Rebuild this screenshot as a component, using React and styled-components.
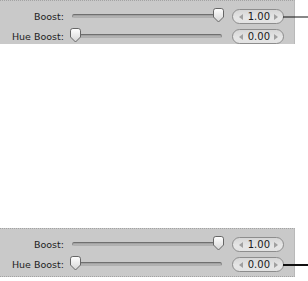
import React from 'react';
import styled, { createGlobalStyle } from 'styled-components';

const Global = createGlobalStyle`
  html, body { margin: 0; padding: 0; background: #ffffff; }
  body { width: 308px; height: 281px; overflow: hidden; font-family: "DejaVu Sans", "Liberation Sans", sans-serif; }
`;

const Page = styled.div`
  display: flex;
  flex-direction: column;
  gap: 184px;
  width: 308px;
`;

const Panel = styled.div`
  box-sizing: border-box;
  width: 295px;
  background: #c9c9c9;
  border-top: 1px dotted #a3a3a3;
  border-bottom: ${(p) => (p.$bottomDots ? '1px dotted #a3a3a3' : 'none')};
  border-right: 1px solid #b9b9b9;
  padding: ${(p) => p.$pad};
  display: grid;
  grid-template-columns: 64px 156px 52px;
  grid-auto-rows: 15px;
  column-gap: 6px;
  row-gap: 5px;
`;

const Label = styled.div`
  text-align: right;
  font-size: 9.5px;
  line-height: 15px;
  color: #1d1d1d;
  white-space: nowrap;
`;

const Slider = styled.div`
  position: relative;
  height: 15px;
`;

const Track = styled.div`
  box-sizing: border-box;
  margin: 5px 4px 0 2px;
  height: 4px;
  border-radius: 2px;
  border-top: 1px solid #6f6f6f;
  border-left: 1px solid #8a8a8a;
  border-right: 1px solid #8a8a8a;
  border-bottom: 1px solid #b0b0b0;
  background: linear-gradient(#9a9a9a, #b9b9b9);
`;

const Thumb = styled.svg`
  position: absolute;
  top: -1px;
  width: 11px;
  height: 15px;
  display: block;
`;

const Field = styled.div`
  position: relative;
  box-sizing: border-box;
  height: 15px;
  border: 1px solid #8d8d8d;
  border-radius: 8px;
  background: linear-gradient(#d6d6d6, #e6e6e6 60%, #e2e2e2);
  display: flex;
  align-items: center;
  padding: 0 5px 0 6px;
  font-size: 10px;
  color: #1a1a1a;
`;

const Arrow = styled.span`
  width: 0;
  height: 0;
  border-top: 3px solid transparent;
  border-bottom: 3px solid transparent;
  ${(p) => (p.$dir === 'left' ? 'border-right: 4px solid #a0a0a0;' : 'border-left: 4px solid #a0a0a0;')}
  margin-left: ${(p) => (p.$dir === 'left' ? '0' : '4px')};
`;

const Value = styled.span`
  flex: 1;
  text-align: right;
  line-height: 13px;
`;

const Callout = styled.div`
  position: absolute;
  left: 100%;
  top: 50%;
  width: 26px;
  height: ${(p) => p.$weight}px;
  transform: translateY(-50%);
  background: #111111;
`;

function SliderControl({ value }) {
  return (
    <Slider>
      <Track />
      <Thumb viewBox="0 0 11 15" style={{ left: `${value * 143}px` }}>
        <defs>
          <linearGradient id="tg" x1="0" y1="0" x2="0" y2="1">
            <stop offset="0" stopColor="#ffffff" />
            <stop offset="1" stopColor="#d4d4d4" />
          </linearGradient>
        </defs>
        <path
          d="M2.8 0.5 H8.2 Q10.5 0.5 10.5 2.8 V9 L5.5 14 L0.5 9 V2.8 Q0.5 0.5 2.8 0.5 Z"
          fill="url(#tg)"
          stroke="#666666"
          strokeWidth="1"
        />
      </Thumb>
    </Slider>
  );
}

function Row({ label, slider, value, callout }) {
  return (
    <>
      <Label>{label}</Label>
      <SliderControl value={slider} />
      <Field>
        <Arrow $dir="left" />
        <Value>{value}</Value>
        <Arrow $dir="right" />
        {callout ? <Callout $weight={callout} /> : null}
      </Field>
    </>
  );
}

export default function App() {
  return (
    <>
      <Global />
      <Page>
        <Panel $pad="8px 10px 0 0">
          <Row label="Boost:" slider={1} value="1.00" callout={1} />
          <Row label="Hue Boost:" slider={0} value="0.00" />
        </Panel>
        <Panel $pad="8px 10px 4px 0" $bottomDots>
          <Row label="Boost:" slider={1} value="1.00" />
          <Row label="Hue Boost:" slider={0} value="0.00" callout={2} />
        </Panel>
      </Page>
    </>
  );
}
